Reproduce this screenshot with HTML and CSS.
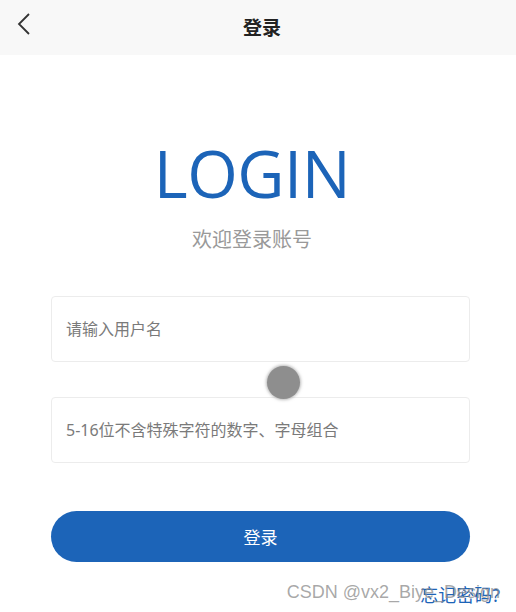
FILE: index.html
```html
<!DOCTYPE html>
<html lang="zh-CN">
<head>
    <meta charset="UTF-8">
    <meta name="viewport" content="width=device-width, initial-scale=1.0">
    <title>登录</title>
    <link rel="stylesheet" href="styles.css">
</head>
<body>
    <header class="nav-bar">
        <a class="nav-back" href="#">
            <svg width="16" height="22" viewBox="0 0 16 22">
                <path d="M13 1 L3 11 L13 21" fill="none" stroke="#333" stroke-width="1.8"/>
            </svg>
        </a>
        <h1 class="nav-title">登录</h1>
    </header>

    <main class="login">
        <div class="login-head">
            <h2 class="login-logo">LOGIN</h2>
            <p class="login-sub">欢迎登录账号</p>
        </div>

        <form class="login-form">
            <div class="field">
                <input type="text" placeholder="请输入用户名">
            </div>
            <div class="field">
                <input type="password" placeholder="5-16位不含特殊字符的数字、字母组合">
            </div>
            <span class="touch-dot"></span>
            <button type="submit" class="btn-login">登录</button>
        </form>

        <div class="login-foot">
            <a class="forgot" href="#">忘记密码?</a>
            <span class="watermark">CSDN @vx2_Biye_Design</span>
        </div>
    </main>
</body>
</html>
```

FILE: styles.css
```css
* {
    margin: 0;
    padding: 0;
    box-sizing: border-box;
}

body {
    font-family: "Noto Sans", "Noto Sans CJK SC", sans-serif;
    background: #fff;
    color: #333;
    width: 516px;
    height: 612px;
    overflow: hidden;
}

/* Nav bar */
.nav-bar {
    position: relative;
    height: 55px;
    background: #f8f8f8;
    display: flex;
    align-items: center;
    justify-content: center;
}

.nav-back {
    position: absolute;
    left: 16px;
    top: 13px;
    display: flex;
}

.nav-title {
    font-size: 19px;
    font-weight: bold;
    color: #222;
    line-height: 1;
    margin-left: 8px;
    margin-top: 2px;
}

/* Content */
.login {
    padding: 0 16px 0 51px;
}

.login-head {
    text-align: center;
    padding-top: 80px;
    width: 402px;
}

.login-logo {
    font-family: "Open Sans", "Noto Sans", sans-serif;
    font-weight: normal;
    font-size: 65px;
    line-height: 76px;
    color: #1c64b8;
    letter-spacing: -0.5px;
}

.login-sub {
    margin-top: 16px;
    font-size: 20px;
    line-height: 26px;
    color: #999;
}

.login-form {
    position: relative;
    margin-top: 43px;
    width: 419px;
}

.field {
    margin-bottom: 35px;
}

.field input {
    width: 419px;
    height: 66px;
    padding: 0 14px;
    border: 1px solid #ececec;
    border-radius: 4px;
    font-family: inherit;
    font-size: 16px;
    color: #333;
    outline: none;
}

.field input::placeholder {
    color: #7a7a7a;
}

.touch-dot {
    position: absolute;
    left: 216px;
    top: 70px;
    width: 33px;
    height: 33px;
    border-radius: 50%;
    background: #8e8e8e;
    box-shadow: 0 0 3px 1px rgba(140, 140, 140, 0.6);
}

.btn-login {
    display: block;
    width: 419px;
    height: 51px;
    margin-top: 48px;
    border: none;
    border-radius: 26px;
    background: #1c64b8;
    color: #fff;
    font-family: inherit;
    font-size: 17px;
    cursor: pointer;
}

.login-foot {
    position: relative;
    height: 40px;
    margin-top: 18px;
}

.forgot {
    position: absolute;
    right: 0;
    top: 3px;
    font-size: 18px;
    line-height: 24px;
    color: #1c64b8;
    text-decoration: none;
}

.watermark {
    position: absolute;
    right: 0;
    top: 1px;
    font-family: "Liberation Sans", Arial, sans-serif;
    font-size: 18px;
    line-height: 22px;
    color: rgba(140, 140, 140, 0.75);
}
```
